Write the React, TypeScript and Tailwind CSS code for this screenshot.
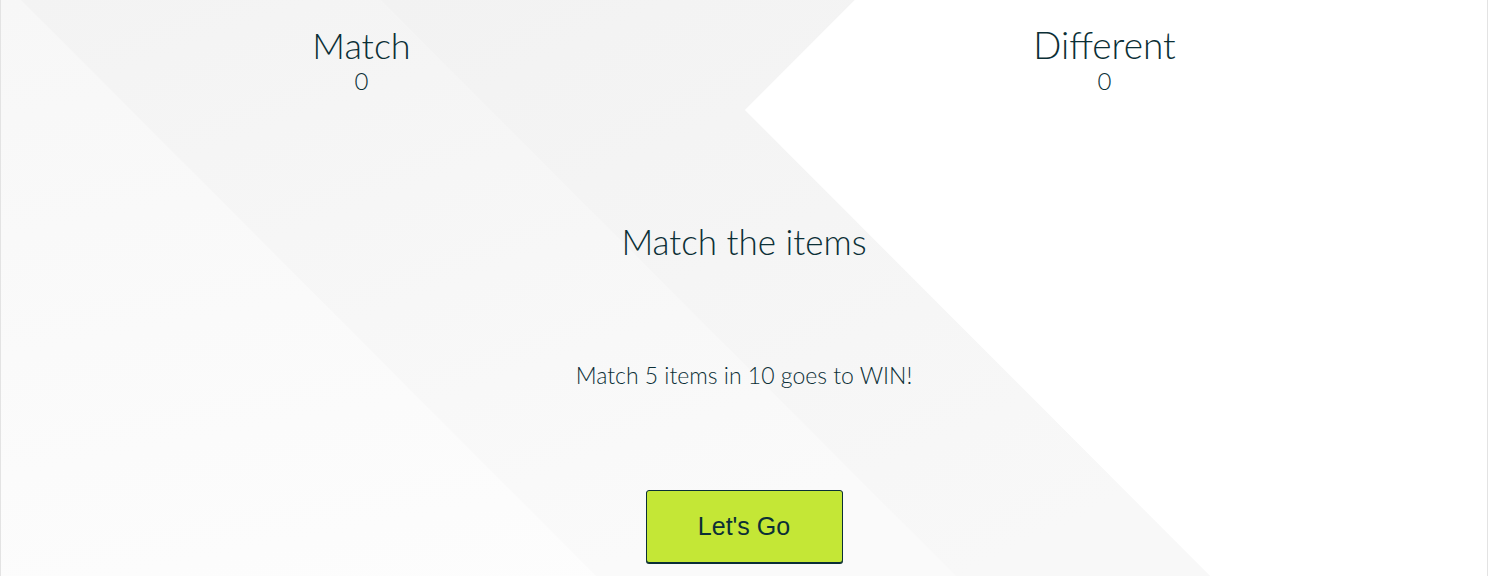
import React from "react";

// Diagonal light-grey backdrop behind the game panel
function Backdrop() {
    return (
        <svg
            className="absolute inset-0 w-full h-full"
            viewBox="0 0 1488 576"
            preserveAspectRatio="none"
            aria-hidden="true"
        >
            <defs>
                <linearGradient id="band" x1="0" y1="0" x2="0.7" y2="1">
                    <stop offset="0" stopColor="#f2f2f2" />
                    <stop offset="1" stopColor="#f8f8f8" />
                </linearGradient>
                <linearGradient id="left" x1="0" y1="0" x2="0.5" y2="1">
                    <stop offset="0" stopColor="#f7f7f7" />
                    <stop offset="1" stopColor="#fdfdfd" />
                </linearGradient>
                <linearGradient id="strip" x1="0" y1="0" x2="0.6" y2="1">
                    <stop offset="0" stopColor="#f3f3f3" />
                    <stop offset="1" stopColor="#fafafa" />
                </linearGradient>
            </defs>
            <rect width="1488" height="576" fill="url(#left)" />
            <polygon points="20,0 380,0 956,576 596,576" fill="url(#strip)" />
            <polygon points="380,0 855,0 745,110 1211,576 956,576" fill="url(#band)" />
            <polygon points="855,0 1488,0 1488,576 1211,576 745,110" fill="#ffffff" />
        </svg>
    );
}

export default function App() {
    const match = 0;
    const different = 0;

    return (
        <div
            className="relative w-full h-[576px] overflow-hidden bg-white border-x border-[#e3e3e3] text-[#0b2f36]"
            style={{ fontFamily: "Lato, 'Open Sans', sans-serif" }}
        >
            <Backdrop />

            <div className="relative flex flex-col items-center">
                {/* Score board */}
                <div className="grid grid-cols-2 w-full pt-[24px]">
                    <div className="flex flex-col items-center pr-[22px]">
                        <h2 className="text-[36px] font-light leading-[1.2]">Match</h2>
                        <span className="text-[24px] font-light leading-[1.2]">{match}</span>
                    </div>
                    <div className="flex flex-col items-center pr-[22px]">
                        <h2 className="text-[37px] font-light leading-[1.2] -mt-[1px]">Different</h2>
                        <span className="text-[24px] font-light leading-[1.2]">{different}</span>
                    </div>
                </div>

                <h1 className="mt-[124px] text-[35px] font-light leading-[1.2]">Match the items</h1>

                <p className="mt-[100px] text-[23px] font-light leading-[1.2]">
                    Match 5 items in 10 goes to WIN!
                </p>

                <button
                    className="mt-[100px] w-[197px] h-[73px] bg-[#c4e736] border border-[#0b2f36] rounded-[3px] shadow-[0_1px_0_#0b2f36] text-[25px] text-[#0b2f36]"
                    style={{ fontFamily: "'Liberation Sans', Arial, sans-serif" }}
                >
                    Let's Go
                </button>
            </div>
        </div>
    );
}
